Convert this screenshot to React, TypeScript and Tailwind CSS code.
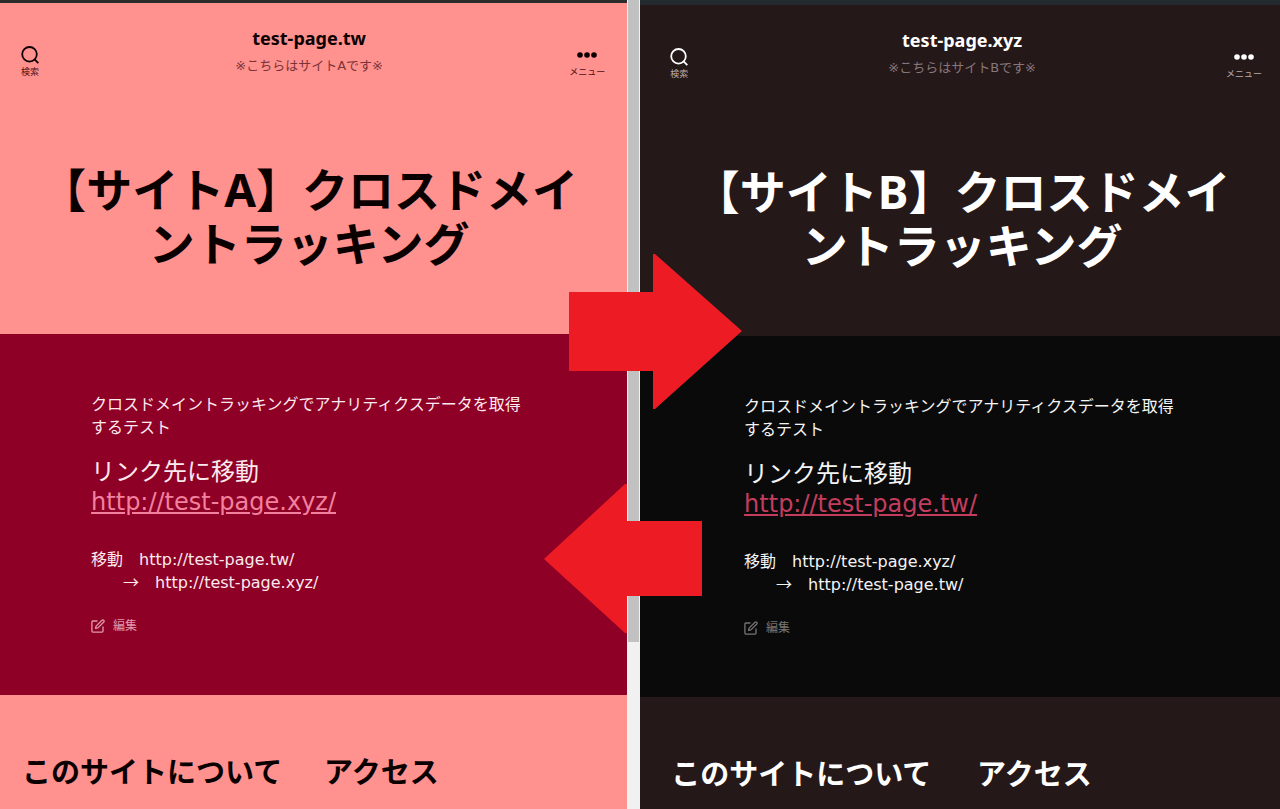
import clsx from "clsx";

const themes = {
  a: {
    pane: "w-[49%] shrink-0",
    bar: "bg-[#2b2b2b] h-[3px]",
    page: "bg-[#ff918f] text-[#0a0000]",
    muted: "text-[#7c3336]",
    label: "text-[#4a1012]",
    content: "bg-[#8e0025] text-[#fbe9ee]",
    link: "text-[#f2809f]",
    edit: "text-[#e29aac]",
    inner: "pr-[9px]",
  },
  b: {
    pane: "flex-1",
    bar: "bg-[#232b30] h-[5px]",
    page: "bg-[#251819] text-white",
    muted: "text-[#86777a]",
    label: "text-[#b9adae]",
    content: "bg-[#0a0a0a] text-[#f4f4f4]",
    link: "text-[#c43d5f]",
    edit: "text-[#767676]",
    inner: "pl-[9px] pr-[5px]",
  },
};

type SiteProps = {
  theme: keyof typeof themes;
  name: string;
  host: string;
  target: string;
};

const SearchIcon = () => (
  <svg width="18" height="18" viewBox="0 0 18 18" fill="none">
    <circle cx="8.5" cy="8.3" r="7.3" stroke="currentColor" strokeWidth="1.8" />
    <path d="M13.6 13.4L17.3 17.1" stroke="currentColor" strokeWidth="1.8" />
  </svg>
);

const DotsIcon = () => (
  <svg width="20" height="6" viewBox="0 0 20 6" fill="currentColor">
    <circle cx="3" cy="3" r="2.8" />
    <circle cx="10" cy="3" r="2.8" />
    <circle cx="17" cy="3" r="2.8" />
  </svg>
);

const EditIcon = () => (
  <svg
    width="14"
    height="14"
    viewBox="0 0 14 14"
    fill="none"
    stroke="currentColor"
    strokeWidth="1.3"
    strokeLinejoin="round"
    strokeLinecap="round"
  >
    <path d="M6 2H1.9Q.9 2 .9 3V12.1Q.9 13.1 1.9 13.1H11Q12 13.1 12 12.1V8" />
    <path d="M4.6 9.4L5.1 7.1L11 1.2Q11.9.5 12.7 1.3Q13.5 2.1 12.8 3L6.9 8.9Z" />
  </svg>
);

function Site({ theme, name, host, target }: SiteProps) {
  const t = themes[theme];

  return (
    <div className={clsx("flex min-w-0 flex-col", t.pane, t.page)}>
      <div className={t.bar}></div>
      <div className={t.inner}>
        <header className="flex items-start justify-between pl-[21px] pr-[13px] pt-[23px]">
          <button className="mt-5 flex w-[28px] flex-col items-start">
            <SearchIcon />
            <span className={clsx("text-[9px] leading-4", t.label)}>検索</span>
          </button>
          <div className="text-center">
            <a
              href="#"
              className="block font-['Noto_Sans','Noto_Sans_CJK_JP',sans-serif] text-lg font-bold leading-6"
            >
              {host}
            </a>
            <p className={clsx("mt-[7px] text-[13px] leading-[18px]", t.muted)}>
              {`※こちらはサイト${name}です※`}
            </p>
          </div>
          <button className="mt-[26px] flex w-[36px] flex-col items-center gap-1.5">
            <DotsIcon />
            <span className={clsx("text-[9px] leading-4", t.label)}>
              メニュー
            </span>
          </button>
        </header>
        <h1 className="px-[34px] pb-16 pt-[82px] text-center font-['Noto_Sans','Noto_Sans_CJK_JP',sans-serif] text-[46px] font-bold leading-[54px]">
          {`【サイト${name}】クロスドメイントラッキング`}
        </h1>
      </div>
      <main className={clsx(t.content, t.inner)}>
        <div className="mx-auto max-w-[436px] pb-[60px] pt-[59px] leading-[23px]">
          <p>
            クロスドメイントラッキングでアナリティクスデータを取得するテスト
          </p>
          <p className="mt-[18px] text-2xl leading-[30px]">
            リンク先に移動
            <br />
            <a href="#" className={clsx("underline", t.link)}>
              {`http://${target}/`}
            </a>
          </p>
          <p className="mt-[31px]">
            {`移動　http://${host}/`}
            <br />
            <span className="font-['Noto_Sans_CJK_JP',sans-serif] leading-none">
              {"　　→　"}
            </span>
            {`http://${target}/`}
          </p>
          <a
            href="#"
            className={clsx(
              "mt-[23px] flex items-center gap-2 text-xs leading-[18px]",
              t.edit
            )}
          >
            <EditIcon />
            編集
          </a>
        </div>
      </main>
      <footer className={t.inner}>
        <div className="grid grid-cols-2 gap-[30px] px-[22px] pt-[60px] text-[29px] font-bold leading-9">
          <h2 className="whitespace-nowrap">このサイトについて</h2>
          <h2>アクセス</h2>
        </div>
      </footer>
    </div>
  );
}

export default function App() {
  return (
    <div
      lang="ja"
      className="flex h-screen overflow-hidden font-['DejaVu_Sans','Noto_Sans_CJK_JP',sans-serif]"
    >
      <Site theme="a" name="A" host="test-page.tw" target="test-page.xyz" />
      <div className="relative w-[13px] shrink-0 border-x border-[#f1f1f1] bg-[#f1f1f1]">
        <div className="h-[642px] bg-[#c1c1c1]"></div>
        <svg
          className="absolute left-[-59px] top-[254px] z-10"
          width="173"
          height="155"
          viewBox="0 0 173 155"
          fill="#ed1c24"
        >
          <path d="M0 38H84V0H86L173 77L86 155H84V117H0Z" />
        </svg>
        <svg
          className="absolute left-[-84px] top-[484px] z-10"
          width="159"
          height="149"
          viewBox="0 0 159 149"
          fill="#ed1c24"
        >
          <path d="M158 37H83V0H81L0 75L81 149H83V112H158Z" />
        </svg>
      </div>
      <Site theme="b" name="B" host="test-page.xyz" target="test-page.tw" />
    </div>
  );
}
